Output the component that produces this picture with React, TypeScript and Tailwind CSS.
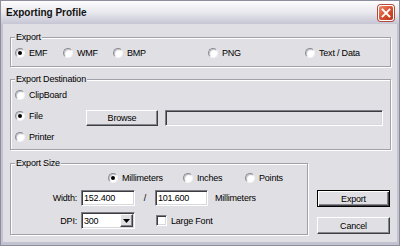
import { clsx as cn } from "clsx";

const sunken =
  "border border-t-[#7c7c84] border-l-[#7c7c84] border-b-white border-r-white shadow-[inset_1px_1px_0_#3c3c40,inset_-1px_-1px_0_#d8d7dc]";
const raised =
  "border border-t-white border-l-white border-b-[#404044] border-r-[#404044] shadow-[inset_-1px_-1px_0_#85858c] bg-[#e0dfe3]";

function Radio({ label, checked, className }: { label: string; checked?: boolean; className?: string }) {
  return (
    <div className={cn("flex items-center h-[12px]", className)}>
      <span className="flex items-center justify-center w-[10px] h-[10px] rounded-full bg-white border border-t-[#8a8a92] border-l-[#8a8a92] border-b-[#f4f4f6] border-r-[#f4f4f6] shadow-[inset_1px_1px_1px_#bdbdc4]">
        {checked && <span className="w-[4px] h-[4px] rounded-full bg-black" />}
      </span>
      <span className="ml-[4px]">{label}</span>
    </div>
  );
}

function Group({ title, className, children }: { title: string; className?: string; children?: React.ReactNode }) {
  return (
    <div className={cn("border border-[#a2a1a9] shadow-[inset_1px_1px_0_#fff,1px_1px_0_#fff]", className)}>
      <div className="-mt-[6px] ml-[4px] w-fit px-[1px] bg-[#e0dfe3] leading-[10px]">{title}</div>
      {children}
    </div>
  );
}

function Button({ label, isDefault }: { label: string; isDefault?: boolean }) {
  return (
    <div
      className={cn(
        "flex items-center justify-center h-[17px] w-full",
        isDefault
          ? "border border-black bg-[#e0dfe3] shadow-[inset_1px_1px_0_#fff,inset_-1px_-1px_0_#404044,inset_-2px_-2px_0_#85858c]"
          : raised
      )}
    >
      {label}
    </div>
  );
}

export default function App() {
  return (
    <div className="w-[400px] h-[246px] flex flex-col bg-[#c3c2d1] border border-[#8e8d9c] text-black text-[9px] tracking-[-0.2px] font-['Liberation_Sans',Arial,sans-serif] leading-[12px]">
      <div className="h-[23px] flex items-center justify-between pl-[5px] pr-[5px] bg-gradient-to-b from-[#fdfdfe] via-[#e8e8ee] to-[#c6c5d4]">
        <span className="font-bold text-[10px] tracking-normal text-[#111]">Exporting Profile</span>
        <div className="w-[16px] h-[16px] rounded-[3px] border border-white bg-gradient-to-br from-[#ec8a6c] via-[#d9502e] to-[#b8341c] flex items-center justify-center shadow-[0_0_0_1px_#b04a3a]">
          <svg width="10" height="10" viewBox="0 0 10 10">
            <path d="M1.5 1.5 L8.5 8.5 M8.5 1.5 L1.5 8.5" stroke="white" strokeWidth="1.8" strokeLinecap="square" />
          </svg>
        </div>
      </div>

      <div className="flex-1 mx-[2px] mb-[3px] bg-[#e0dfe3] flex flex-col pl-[7px] pr-[6px] pt-[13px]">
        <Group title="Export" className="h-[30px]">
          <div className="flex mt-[5px] pl-[4px]">
            <Radio label="EMF" checked className="w-[48px]" />
            <Radio label="WMF" className="w-[50px]" />
            <Radio label="BMP" className="w-[95px]" />
            <Radio label="PNG" className="w-[97px]" />
            <Radio label="Text / Data" />
          </div>
        </Group>

        <Group title="Export Destination" className="h-[71px] mt-[12px]">
          <div className="flex flex-col pl-[4px]">
            <Radio label="ClipBoard" className="mt-[5px]" />
            <div className="flex items-start mt-[9px]">
              <Radio label="File" checked className="w-[71px]" />
              <div className={cn("w-[72px] h-[16px] flex items-center justify-center", raised)}>Browse</div>
              <div className={cn("ml-[7px] w-[218px] h-[16px] bg-[#e0dfe3]", sunken)} />
            </div>
            <Radio label="Printer" className="mt-[5px]" />
          </div>
        </Group>

        <div className="flex mt-[13px]">
          <Group title="Export Size" className="w-[298px] h-[72px]">
            <div className="flex mt-[4px] pl-[97px]">
              <Radio label="Millimeters" checked className="w-[75px]" />
              <Radio label="Inches" className="w-[62px]" />
              <Radio label="Points" />
            </div>
            <div className="flex items-center mt-[6px] h-[16px]">
              <span className="w-[66px] text-right">Width:</span>
              <div className={cn("ml-[4px] w-[54px] h-[16px] bg-white pl-[2px] flex items-center", sunken)}>152.400</div>
              <span className="w-[20px] text-center">/</span>
              <div className={cn("w-[53px] h-[16px] bg-white pl-[2px] flex items-center", sunken)}>101.600</div>
              <span className="ml-[7px]">Millimeters</span>
            </div>
            <div className="flex items-center mt-[6px] h-[17px]">
              <span className="w-[66px] text-right">DPI:</span>
              <div className={cn("ml-[4px] w-[54px] h-[17px] bg-white flex items-center justify-between p-[1px]", sunken)}>
                <span className="pl-[1px]">300</span>
                <div className={cn("w-[13px] h-full flex items-center justify-center", raised)}>
                  <svg width="7" height="4" viewBox="0 0 7 4">
                    <path d="M0 0 H7 L3.5 4 Z" fill="black" />
                  </svg>
                </div>
              </div>
              <span className={cn("ml-[21px] w-[11px] h-[11px] bg-white", sunken)} />
              <span className="ml-[4px]">Large Font</span>
            </div>
          </Group>

          <div className="ml-[9px] w-[73px] flex flex-col pt-[27px]">
            <Button label="Export" isDefault />
            <div className="mt-[10px]">
              <Button label="Cancel" />
            </div>
          </div>
        </div>
      </div>
    </div>
  );
}
